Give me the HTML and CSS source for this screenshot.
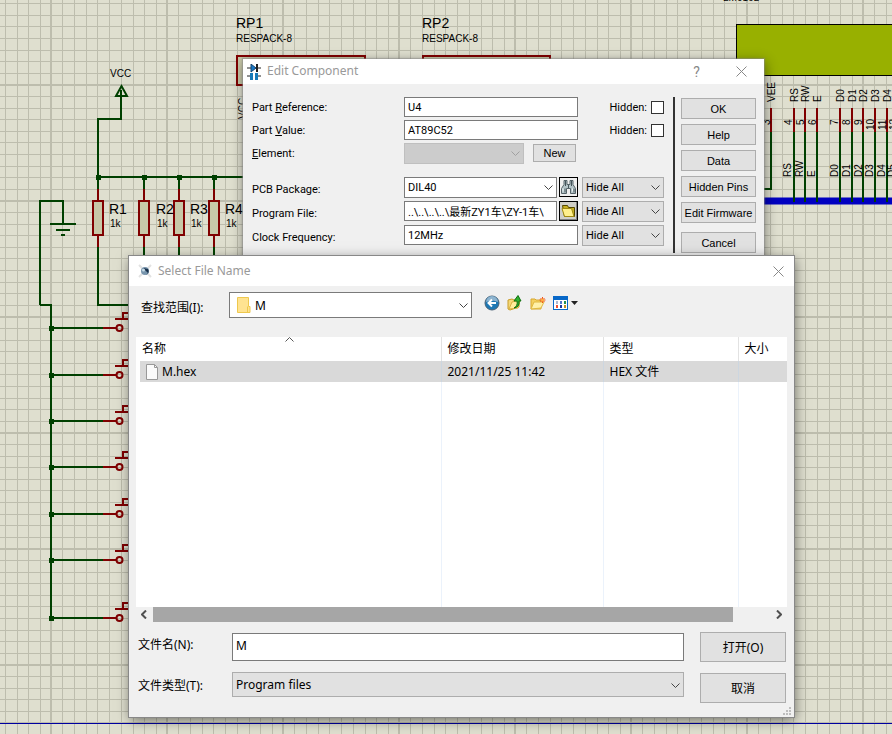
FILE: index.html
```
<!DOCTYPE html>
<html lang="zh-CN">
<head>
<meta charset="utf-8">
<title>Edit Component</title>
<link rel="stylesheet" href="styles.css">
</head>
<body>
<main class="desktop">
<svg class="schematic" aria-hidden="true">
  <defs>
    <pattern id="grid" x="50" y="84" width="116" height="116" patternUnits="userSpaceOnUse">
      <rect width="116" height="116" fill="#dfdfcf"/>
      <path d="M12.500 0V116M24.500 0V116M36.500 0V116M47.500 0V116M59.500 0V116M71.500 0V116M83.500 0V116M94.500 0V116M106.500 0V116M0 12.500H116M0 24.500H116M0 35.500H116M0 47.500H116M0 58.500H116M0 70.500H116M0 82.500H116M0 93.500H116M0 105.500H116M1 0V116M0 1H116" class="gridline"/>
      <path d="M1 0V116M0 1H116" class="gridline major"/>
    </pattern>
    <g id="switch">
      <path class="wire" d="M51 0H103"/>
      <rect class="node" x="49" y="-2" width="5" height="5"/>
      <path class="pin" d="M103 0H116M115 -9H132M123 -9V-15H132"/>
      <circle class="pin" cx="119.500" cy="0" r="3"/>
    </g>
    <g id="resistor">
      <rect class="node" x="-2" y="175" width="5" height="5"/>
      <path class="wire" d="M0 177V190M0 246V262"/>
      <path class="pin" d="M0 189V201M0 235V247"/>
      <rect class="part" x="-5" y="201" width="10" height="34"/>
    </g>
  </defs>
  <rect width="100%" height="100%" fill="url(#grid)"/>
  <path d="M0 723.500H4000" stroke="#0000a0"/>

  <path class="wire" d="M121 90V119H98V177H260M98 250V305H140M116 96L121.500 86L127 96ZM40 305V201H63V224M40 305H51V619M50 224H76M56 230H70M61 235H65"/>
  <use href="#resistor" x="98"/><use href="#resistor" x="144"/><use href="#resistor" x="179"/><use href="#resistor" x="214"/>
  <use href="#switch" y="328"/><use href="#switch" y="375"/><use href="#switch" y="421"/><use href="#switch" y="467"/><use href="#switch" y="514"/><use href="#switch" y="560"/><use href="#switch" y="618"/>
  <rect class="part" x="237" y="56" width="128" height="29"/>
  <rect class="part" x="423" y="56" width="127" height="29"/>
  <g class="ref"><text x="236" y="28">RP1</text><text x="422" y="28">RP2</text>
    <text x="109" y="214">R1</text><text x="156" y="214">R2</text><text x="190" y="214">R3</text><text x="225" y="214">R4</text></g>
  <g class="val"><text x="236" y="42">RESPACK-8</text><text x="422" y="42">RESPACK-8</text><text x="110" y="77">VCC</text>
    <text x="110" y="227">1k</text><text x="157" y="227">1k</text><text x="191" y="227">1k</text><text x="226" y="227">1k</text>
    <text x="723" y="1">LM016L</text><text transform="translate(246 119) rotate(-90)">VCC</text></g>

  <rect x="736.500" y="24.500" width="170" height="51" fill="#98b000" stroke="#000"/>
  <path d="M760 201H4000" stroke="#0000c0" stroke-width="7"/>
  <path class="wire" d="M771 131V189H760M794 131V202M805 131V202M817 131V202M840 131V202M852 131V202M863 131V202M875 131V202M887 131V202"/>
  <path class="pin" d="M771 108V132M794 108V132M805 108V132M817 108V132M840 108V132M852 108V132M863 108V132M875 108V132M887 108V132"/>
  <g class="val">
    <text transform="translate(775 102) rotate(-90)">VEE</text><text transform="translate(798 102) rotate(-90)">RS</text><text transform="translate(809 102) rotate(-90)">RW</text><text transform="translate(821 102) rotate(-90)">E</text><text transform="translate(844 102) rotate(-90)">D0</text><text transform="translate(856 102) rotate(-90)">D1</text><text transform="translate(867 102) rotate(-90)">D2</text><text transform="translate(879 102) rotate(-90)">D3</text><text transform="translate(891 102) rotate(-90)">D4</text>
    <text transform="translate(770 125) rotate(-90)">3</text><text transform="translate(792 125) rotate(-90)">4</text><text transform="translate(804 125) rotate(-90)">5</text><text transform="translate(816 125) rotate(-90)">6</text><text transform="translate(838 125) rotate(-90)">7</text><text transform="translate(850 125) rotate(-90)">8</text><text transform="translate(862 125) rotate(-90)">9</text><text transform="translate(874 130) rotate(-90)">10</text><text transform="translate(886 130) rotate(-90)">11</text><text transform="translate(897 130) rotate(-90)">12</text>
    <text transform="translate(791 177) rotate(-90)">RS</text><text transform="translate(803 177) rotate(-90)">RW</text><text transform="translate(815 177) rotate(-90)">E</text><text transform="translate(838 177) rotate(-90)">D0</text><text transform="translate(850 177) rotate(-90)">D1</text><text transform="translate(862 177) rotate(-90)">D2</text><text transform="translate(873 177) rotate(-90)">D3</text><text transform="translate(885 177) rotate(-90)">D4</text><text transform="translate(895 177) rotate(-90)">D5</text>
  </g>
</svg>

<section class="window component" aria-label="Edit Component">
  <header class="titlebar">
    <svg width="14" height="16" viewBox="0 0 14 16"><path d="M0 4H14M0 12H4M10 12H14" stroke="#222"/><path d="M4 0V8L9 4Z" fill="#1878c8" stroke="#14446c"/><path d="M10 0V8" stroke="#222" stroke-width="2"/><rect x="3" y="9" width="3" height="7" fill="#187ab8"/><rect x="8" y="9" width="3" height="7" fill="#187ab8"/></svg>
    <h1>Edit Component</h1>
    <button class="caption" type="button" aria-label="Help window">?</button>
    <button class="caption" type="button" aria-label="Close"><svg width="11" height="11" viewBox="0 0 11 11"><path d="M.5.5l10 10M10.500.5l-10 10" stroke="#888"/></svg></button>
  </header>
  <form class="component-body">
    <div class="fields">
      <div class="group">
        <div class="row"><label for="ref">Part <u>R</u>eference:</label><input id="ref" class="wide" value="U4"><label class="tick">Hidden: <input type="checkbox"></label></div>
        <div class="row"><label for="value">Part <u>V</u>alue:</label><input id="value" class="wide" value="AT89C52"><label class="tick">Hidden: <input type="checkbox"></label></div>
        <div class="row"><label for="element"><u>E</u>lement:</label><span class="combo disabled"><select id="element" disabled><option></option></select><svg class="chev" viewBox="0 0 9 5"><path d="M.5.5l4 4 4-4"/></svg></span><button class="new" type="button">New</button></div>
      </div>
      <div class="group lower">
        <div class="row"><label for="pcb">PCB Package:</label><span class="combo white"><select id="pcb"><option>DIL40</option></select><svg class="chev" viewBox="0 0 9 5"><path d="M.5.5l4 4 4-4"/></svg></span>
          <button class="tool" type="button" aria-label="Find package"><svg width="17" height="16" viewBox="0 0 17 16"><path d="M4 1.500h3v4h3v-4h3v4l2.500 4v5h-5v-5h-4v5h-5v-5L4 5.500z" fill="#b4c4c8" stroke="#56646a"/><path d="M3 9.500v3M12.500 9.500v3" stroke="#eef4f6"/><path d="M5.500 2v5M11.500 2v5M8.500 6v3M5 9.500v4M14 9.500v4" stroke="#45545a"/></svg></button>
          <span class="combo grey"><select aria-label="PCB Package visibility"><option>Hide All</option></select><svg class="chev" viewBox="0 0 9 5"><path d="M.5.5l4 4 4-4"/></svg></span></div>
        <div class="row"><label for="prog">Program File:</label><input id="prog" value="..\..\..\..\最新ZY1车\ZY-1车\">
          <button class="tool bevel" type="button" aria-label="Browse"><svg width="17" height="16" viewBox="0 0 17 16"><path d="M2.500 2.500h5l1 2h6v9h-10z" fill="#c8b020" stroke="#554800"/><path d="M2 5.500h9.500l2.500 8H4.500z" fill="#fff08c" stroke="#a08a10"/></svg></button>
          <span class="combo grey"><select aria-label="Program File visibility"><option>Hide All</option></select><svg class="chev" viewBox="0 0 9 5"><path d="M.5.5l4 4 4-4"/></svg></span></div>
        <div class="row"><label for="clock">Clock Frequency:</label><input id="clock" class="wide" value="12MHz">
          <span class="combo grey"><select aria-label="Clock Frequency visibility"><option>Hide All</option></select><svg class="chev" viewBox="0 0 9 5"><path d="M.5.5l4 4 4-4"/></svg></span></div>
      </div>
    </div>
    <div class="actions">
      <button type="button">OK</button><button type="button">Help</button><button type="button">Data</button><button type="button">Hidden Pins</button><button type="button">Edit Firmware</button><button class="cancel" type="button">Cancel</button>
    </div>
  </form>
</section>

<section class="window files" aria-label="Select File Name">
  <header class="titlebar">
    <svg width="14" height="14" viewBox="0 0 14 14"><path d="M1 1l3 3M13 1l-3 3M1 13l3-3M13 13l-3-3" stroke="#e2e2e2" stroke-width="2"/><circle cx="7" cy="7" r="4" fill="#7895ad"/><path d="M5 4l5 5-2 2a4 4 0 0 0 2-6z" fill="#18304a"/><circle cx="5.500" cy="6" r="1.500" fill="#c8dce8"/></svg>
    <h1>Select File Name</h1>
    <button class="caption" type="button" aria-label="Close"><svg width="11" height="11" viewBox="0 0 11 11"><path d="M.5.5l10 10M10.500.5l-10 10" stroke="#888"/></svg></button>
  </header>
  <form class="files-body">
    <div class="lookin">
      <label for="folder">查找范围(I):</label>
      <span class="combo white folder"><svg class="folder-icon" width="14" height="16" viewBox="0 0 14 16"><path d="M.5.5h11v9h1.500v6H.5z" fill="#ffe391" stroke="#eec84e"/><path d="M10.500 15V9.500" stroke="#eec84e"/></svg><select id="folder"><option>M</option></select><svg class="chev" viewBox="0 0 9 5"><path d="M.5.5l4 4 4-4"/></svg></span>
      <div class="nav">
        <button type="button" aria-label="Back"><svg width="16" height="16" viewBox="0 0 16 16"><circle cx="8" cy="8" r="7" fill="#1e78b4" stroke="#4a6276"/><path d="M2 7a6 6 0 0 1 12 0q-6-3-12 0" fill="#8db4d0"/><path d="M12 8H5M8 4.500L4.500 8 8 11.500" fill="none" stroke="#fff" stroke-width="2"/></svg></button>
        <button type="button" aria-label="Up one level"><svg width="16" height="16" viewBox="0 0 16 16"><path d="M1 5l4-1 2 1 5-1v8l-9 3-2-1z" fill="#f4d878" stroke="#c89c28"/><path d="M2 14l3-7 8-2-2 8z" fill="#ffec9c" stroke="#d8b040"/><path d="M7 13q4-2 3-7H7l4-5.500L14 6h-2q1 6-5 7z" fill="#30b030" stroke="#107010"/></svg></button>
        <button type="button" aria-label="New folder"><svg width="16" height="16" viewBox="0 0 16 16"><path d="M1 4h4l1 1h5v9H1z" fill="#f4d060" stroke="#d8a830"/><path d="M1 14l3-7h10l-3 6z" fill="#fff0a8" stroke="#e0b840"/><path d="M12.500 2v6M9.500 5h6M10.500 3l4 4M14.500 3l-4 4" stroke="#f05018"/><circle cx="12.500" cy="5" r="1.500" fill="#ffb040"/></svg></button>
        <button class="views" type="button" aria-label="Views"><svg width="26" height="16" viewBox="0 0 26 16"><rect x=".5" y="1.500" width="14" height="13" fill="#fff" stroke="#0868c8"/><rect x="0" y="1" width="15" height="4" fill="#0868c8"/><path d="M3 6h2v3H3z" fill="#b0b8d0"/><path d="M7 6h2v3H7z" fill="#5078c8"/><path d="M11 6h2v3h-2z" fill="#209050"/><path d="M3 10h2v3H3z" fill="#f05030"/><path d="M7 10h2v3H7z" fill="#1838a0"/><path d="M11 10h2v3h-2z" fill="#c09020"/><path d="M18 6h7l-3.500 4z" fill="#222"/></svg></button>
      </div>
    </div>
    <div class="list">
      <svg class="sort" width="9" height="5" viewBox="0 0 9 5"><path d="M.5 4.500l4-4 4 4" fill="none" stroke="#555"/></svg>
      <table>
        <colgroup><col class="c-name"><col class="c-date"><col class="c-type"><col></colgroup>
        <thead><tr><th>名称</th><th>修改日期</th><th>类型</th><th>大小</th></tr></thead>
        <tbody>
          <tr class="selected"><td><svg class="doc" width="12" height="16" viewBox="0 0 12 16"><path d="M.5.5h8l3 3v12H.5z" fill="#fbfbfb" stroke="#999"/><path d="M8.500.5v3h3" fill="none" stroke="#999"/></svg>M.hex</td><td>2021/11/25 11:42</td><td>HEX 文件</td><td></td></tr>
          <tr class="empty"><td></td><td></td><td></td><td></td></tr>
        </tbody>
      </table>
    </div>
    <div class="scroll">
      <svg width="6" height="9" viewBox="0 0 6 9"><path d="M5 .5l-4 4 4 4" fill="none" stroke="#505050" stroke-width="2"/></svg>
      <div class="track"><div class="thumb"></div></div>
      <svg width="6" height="9" viewBox="0 0 6 9"><path d="M1 .5l4 4-4 4" fill="none" stroke="#505050" stroke-width="2"/></svg>
    </div>
    <div class="bottom">
      <label for="fname">文件名(N):</label><input id="fname" value="M"><button type="button">打开(O)</button>
      <label for="ftype">文件类型(T):</label><span class="combo grey"><select id="ftype"><option>Program files</option></select><svg class="chev" viewBox="0 0 9 5"><path d="M.5.5l4 4 4-4"/></svg></span><button type="button">取消</button>
    </div>
  </form>
  <svg class="grip" width="8" height="8" viewBox="0 0 8 8"><path d="M6 0h2v2H6zM3 3h2v2H3zM6 3h2v2H6zM0 6h2v2H0zM3 6h2v2H3zM6 6h2v2H6z" fill="#bdbdbd"/></svg>
</section>
</main>
</body>
</html>
```
FILE: styles.css
```
* { box-sizing: border-box; }
body { margin: 0; overflow: hidden; background: #dfdfcf; }
.desktop { position: relative; min-height: 100vh; overflow: hidden; }
button, input, select { margin: 0; font: inherit; color: inherit; border-radius: 0; }

/* schematic canvas */
.schematic { position: absolute; inset: 0; width: 100%; height: 100%; }
.gridline { fill: none; stroke: #bdbdad; stroke-width: 1; }
.gridline.major { stroke-width: 2; }
.wire { fill: none; stroke: #004000; stroke-width: 2; }
.node { fill: #004000; }
.pin { fill: none; stroke: #800000; stroke-width: 2; }
.part { fill: #c8c8a8; stroke: #800000; stroke-width: 2; }
.ref, .val { font-family: "Liberation Sans", sans-serif; font-size: 14px; fill: #000; }
.val { font-size: 10px; }

/* windows */
.window { position: absolute; background: #f0f0f0; color: #000; }
.titlebar { display: flex; align-items: center; background: #fff; }
.titlebar h1 { flex: 1; margin: 0 0 0 6px; padding-bottom: 2px; font-family: "Noto Sans", sans-serif; font-size: 12px; font-weight: 400; color: #999; }
.caption { display: grid; place-items: center; width: 45px; height: 24px; padding: 0; border: 0; background: none; font-size: 14px; color: #888; }

.combo { position: relative; display: block; }
.combo select { display: block; width: 100%; height: 100%; padding: 0 3px; appearance: none; border: 1px solid #adadad; background: #e1e1e1; color: #000; }
.combo.white select { border-color: #7a7a7a; background: #fff; }
.combo.disabled select { border-color: #bfbfbf; background: #ccc; opacity: 1; }
.chev { position: absolute; right: 4px; top: 50%; width: 9px; height: 5px; margin-top: -2px; fill: none; stroke: #444; pointer-events: none; }
.combo.disabled .chev { stroke: #a0a0a0; }

/* component editor */
.component { left: 243px; top: 59px; width: 521px; box-shadow: 0 0 1px 1px #8888, 1px 3px 12px #0007; font-family: Roboto, "Noto Sans CJK SC", sans-serif; font-size: 11px; }
.component .titlebar { height: 25px; padding-left: 4px; }
.component-body { display: flex; padding: 13px 8px 12px 9px; }
.fields { display: grid; flex: 1; gap: 14px; align-content: start; }
.group { display: grid; gap: 3px; }
.group.lower { gap: 4px; }
.row { display: flex; align-items: center; height: 20px; }
.row > label:first-child { width: 152px; }
.lower .row > label { padding-top: 4px; }
.row > input { width: 153px; height: 20px; padding: 0 3px; border: 1px solid #7a7a7a; background: #fff; }
.row > input.wide { width: 174px; }
.row .combo { width: 153px; height: 21px; }
.row .combo.disabled { width: 120px; }
.row .combo.grey { width: 82px; margin-left: 4px; }
.row .wide + .combo.grey { margin-left: auto; }
.tick { display: flex; align-items: center; gap: 4px; margin-left: auto; }
.tick input { width: 13px; height: 13px; appearance: none; border: 1px solid #333; background: #fff; }
.new { width: 43px; height: 18px; margin-left: 9px; padding: 0; border: 1px solid #adadad; background: #e1e1e1; }
.tool { display: grid; place-items: center; width: 19px; height: 20px; margin-left: auto; padding: 0; border: 1px solid #000; background: #f0f0f0; }
.tool.bevel { background: #d0d0c8; box-shadow: inset -1px -1px #808080; }
.actions { display: grid; gap: 5px; width: 83px; margin-left: 9px; padding: 1px 0 0 6px; border-left: 2px solid #333; align-content: start; }
.actions button, .new { font-family: "Liberation Sans", sans-serif; font-size: 11px; }
.actions button { height: 21px; padding: 0; border: 1px solid #adadad; background: #e1e1e1; }
.actions .cancel { margin-top: 4px; }

/* file picker */
.files { left: 129px; top: 256px; width: 665px; box-shadow: 0 0 0 1px #888, 1px 3px 12px #0008; font-family: "Noto Sans", "Noto Sans CJK SC", sans-serif; font-size: 12px; }
.files .titlebar { height: 30px; padding-left: 9px; }
.files .titlebar .caption { width: 31px; }
.files-body { padding: 6px 7px 14px; }
.lookin { display: flex; align-items: start; height: 45px; padding-left: 5px; }
.lookin label { width: 88px; line-height: 32px; }
.folder { width: 243px; height: 26px; }
.folder select { padding-left: 25px; }
.folder-icon { position: absolute; left: 8px; top: 5px; pointer-events: none; }
.nav { display: flex; gap: 7px; margin: 3px 0 0 12px; }
.nav button { display: block; padding: 0; border: 0; background: none; }
.nav svg { display: block; }
.list { position: relative; height: 270px; padding-left: 4px; background: #fff; }
.sort { position: absolute; left: 149px; top: 0; }
table { width: 100%; height: 100%; border-collapse: collapse; table-layout: fixed; }
.c-name { width: 301px; }
.c-date { width: 162px; }
.c-type { width: 135px; }
th, td { padding: 0 6px; border-right: 1px solid #ebf2fb; font-weight: 400; text-align: left; line-height: 18px; }
th { height: 24px; border-color: #e2e2e2; padding-left: 6px; }
th:first-child { padding-left: 2px; }
th:last-child, td:last-child { border-right: 0; }
.selected { background: #d9d9d9; }
.selected td { height: 21px; border-color: #ccd6e0; }
.doc { margin-right: 4px; vertical-align: middle; }
.scroll { display: flex; align-items: center; height: 15px; padding: 0 5px; gap: 6px; }
.track { flex: 1; height: 15px; }
.thumb { width: 94%; height: 100%; background: #a6a6a6; }
.bottom { display: grid; grid-template-columns: 78px 1fr 86px; align-items: center; column-gap: 16px; row-gap: 10px; padding: 10px 1px 0 2px; }
.bottom label { padding-bottom: 6px; white-space: nowrap; }
.bottom input { height: 28px; padding: 0 3px 4px; border: 1px solid #7a7a7a; background: #fff; }
.bottom .combo { height: 25px; margin-bottom: 6px; }
.bottom button { height: 30px; padding: 0; border: 1px solid #adadad; background: #e1e1e1; }
.grip { position: absolute; right: 3px; bottom: 2px; }
```
